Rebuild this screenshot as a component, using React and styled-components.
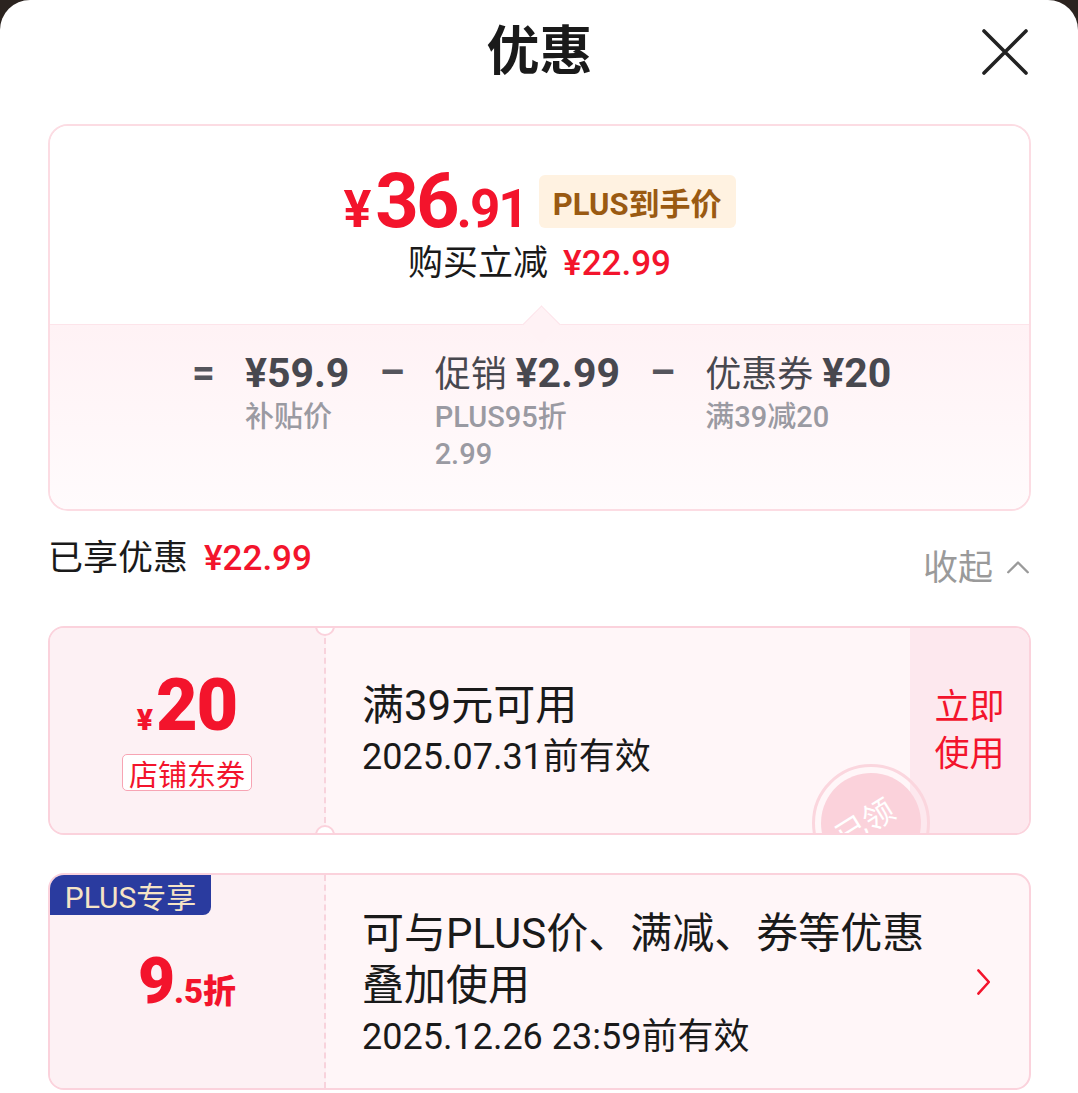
import React from 'react';
import styled, { createGlobalStyle } from 'styled-components';

const GlobalStyle = createGlobalStyle`
  html, body {
    margin: 0;
    padding: 0;
    background: #2b231f;
  }
  body {
    font-family: Roboto, "Noto Sans CJK SC", sans-serif;
    color: #1a1a1a;
  }
  * {
    box-sizing: border-box;
  }
`;

const RED = '#f3142c';

const Sheet = styled.div`
  width: 1078px;
  min-height: 1093px;
  background: #fff;
  border-radius: 30px 30px 0 0;
  padding: 0 47px 0 48px;
  overflow: hidden;
`;

const Header = styled.div`
  height: 104px;
  display: grid;
  grid-template-columns: 1fr auto 1fr;
  align-items: center;
`;

const Title = styled.h1`
  grid-column: 2;
  margin: 0;
  font-size: 53px;
  font-weight: 700;
  line-height: 1;
  color: #1a1a1a;
`;

const CloseButton = styled.button`
  justify-self: end;
  margin-right: 2px;
  width: 48px;
  height: 48px;
  padding: 0;
  border: none;
  background: none;
  display: flex;
  align-items: center;
  justify-content: center;
`;

const PriceCard = styled.div`
  margin-top: 20px;
  border: 2px solid #fcdce3;
  border-radius: 20px;
  overflow: hidden;
`;

const PriceTop = styled.div`
  height: 198px;
  padding-top: 40px;
  display: flex;
  flex-direction: column;
  align-items: center;
  background: #fff;
`;

const PriceRow = styled.div`
  display: flex;
  align-items: center;
  height: 70px;
  color: ${RED};
  font-weight: 700;
`;

const Yen = styled.span`
  font-size: ${p => p.$size}px;
  font-weight: 700;
  margin-right: ${p => p.$gap || 0}px;
`;

const PriceNum = styled.span`
  display: flex;
  align-items: baseline;
  line-height: 1;
`;

const BigDigits = styled.span`
  font-size: 76px;
  letter-spacing: -3px;
`;

const SmallDigits = styled.span`
  font-size: 53px;
  letter-spacing: -2px;
`;

const PlusTag = styled.span`
  margin-left: 12px;
  height: 53px;
  padding: 0 14px;
  display: flex;
  align-items: center;
  background: #fff2e1;
  border-radius: 6px;
  color: #9a5a12;
  font-size: 31px;
  font-weight: 700;
`;

const SaveRow = styled.div`
  margin-top: 6px;
  display: flex;
  align-items: center;
  gap: 15px;
  font-size: 35px;
  line-height: 44px;
  color: #1a1a1a;
`;

const RedAmount = styled.span`
  color: ${RED};
  font-weight: 500;
  font-size: ${p => p.$size || 35}px;
`;

const PriceBottom = styled.div`
  position: relative;
  height: 185px;
  border-top: 1px solid #fde4ea;
  background: linear-gradient(#fff2f5, #fffbfc);
  padding: 24px 0 0 142px;
  display: flex;
  align-items: flex-start;
  gap: 30px;

  &::before {
    content: '';
    position: absolute;
    left: 478px;
    top: -14px;
    width: 26px;
    height: 26px;
    background: #fff2f5;
    border-left: 1px solid #fde4ea;
    border-top: 1px solid #fde4ea;
    transform: rotate(45deg);
  }
`;

const Operator = styled.span`
  font-size: 40px;
  font-weight: 700;
  line-height: 48px;
  color: #55555c;
`;

const Term = styled.div`
  display: flex;
  flex-direction: column;
`;

const TermTitle = styled.div`
  font-size: 36px;
  line-height: 48px;
  color: #48484f;
  white-space: nowrap;

  b {
    font-weight: 700;
    font-size: 41px;
  }
`;

const TermSub = styled.div`
  font-size: 29px;
  line-height: 37px;
  color: #9a9aa2;
  font-weight: 500;
`;

const EnjoyRow = styled.div`
  height: 115px;
  display: flex;
  justify-content: space-between;
  align-items: flex-start;
  padding-top: 25px;
`;

const EnjoyLabel = styled.div`
  display: flex;
  align-items: center;
  gap: 16px;
  font-size: 35px;
  line-height: 46px;
`;

const Collapse = styled.button`
  margin-top: 11px;
  border: none;
  background: none;
  padding: 0;
  display: flex;
  align-items: center;
  gap: 12px;
  font-family: inherit;
  font-size: 35px;
  line-height: 44px;
  color: #9a9a9a;
`;

const Coupon = styled.div`
  position: relative;
  height: ${p => p.$height}px;
  margin-bottom: 38px;
  display: grid;
  grid-template-columns: 276px 1fr ${p => (p.$action ? '119px' : '70px')};
  border: 2px solid #fbd2dc;
  border-radius: 16px;
  overflow: hidden;
  background: #fff6f8;
`;

const CouponLeft = styled.div`
  position: relative;
  display: flex;
  flex-direction: column;
  align-items: center;
  justify-content: center;
  background: #fdf1f4;
  border-right: 2px dashed #f8d3dc;
`;

const Notch = styled.span`
  position: absolute;
  right: -11px;
  ${p => (p.$bottom ? 'bottom: -12px;' : 'top: -12px;')}
  width: 20px;
  height: 20px;
  border-radius: 50%;
  background: #fff;
  border: 2px solid #fbd2dc;
  z-index: 2;
`;

const Amount = styled.div`
  display: flex;
  align-items: baseline;
  color: ${RED};
  font-weight: 900;
  line-height: 1;
`;

const AmountBig = styled.span`
  font-size: ${p => p.$size}px;
  letter-spacing: -1px;
`;

const AmountSmall = styled.span`
  font-size: ${p => p.$size}px;
  margin-right: ${p => p.$gap || 0}px;
`;

const StoreTag = styled.span`
  margin-top: 12px;
  padding: 0 6px;
  height: 37px;
  display: flex;
  align-items: center;
  border: 1px solid #f7a4b3;
  border-radius: 5px;
  background: #fff;
  color: ${RED};
  font-size: 29px;
`;

const PlusBadge = styled.span`
  position: absolute;
  left: 0;
  top: 0;
  width: 161px;
  height: 40px;
  display: flex;
  align-items: center;
  justify-content: center;
  background: #2a3b9f;
  border-radius: 0 0 8px 0;
  color: #f5e4c6;
  font-size: 30px;
`;

const CouponBody = styled.div`
  display: flex;
  flex-direction: column;
  justify-content: center;
  padding: ${p => p.$offset || 0}px 0 0 36px;
  color: #1a1a1a;
`;

const BodyTitle = styled.div`
  font-size: 42px;
  line-height: 52px;
  white-space: nowrap;
`;

const BodyDate = styled.div`
  font-size: 36px;
  line-height: 50px;
  white-space: nowrap;
`;

const UseNow = styled.div`
  display: flex;
  align-items: center;
  justify-content: center;
  background: #fde8ee;
  color: ${RED};
  font-size: 35px;
  line-height: 47px;
  text-align: center;
`;

const ArrowCell = styled.div`
  display: flex;
  align-items: center;
  justify-content: flex-start;
  padding-left: 10px;
`;

const Stamp = styled.div`
  position: absolute;
  left: 762px;
  top: 136px;
  width: 118px;
  height: 118px;
  border-radius: 50%;
  border: 3px solid #fbd6de;
  display: flex;
  align-items: center;
  justify-content: center;
`;

const StampInner = styled.div`
  width: 100px;
  height: 100px;
  border-radius: 50%;
  background: #fbd2db;
  display: flex;
  align-items: center;
  justify-content: center;
  color: #fff;
  font-size: 31px;
  transform: rotate(-32deg);
  padding: 0 10px 12px 0;
`;

const terms = [
  { title: '¥59.9', sub: ['补贴价'] },
  { title: '促销', amount: '¥2.99', sub: ['PLUS95折', '2.99'] },
  { title: '优惠券', amount: '¥20', sub: ['满39减20'] },
];

function CloseIcon() {
  return (
    <svg width="48" height="48" viewBox="0 0 48 48">
      <path d="M3 3 L45 45 M45 3 L3 45" stroke="#222" strokeWidth="3.6" strokeLinecap="round" />
    </svg>
  );
}

function Chevron({ dir, color, size }) {
  const d = dir === 'up' ? 'M3 15 L12 6 L21 15' : 'M8 2 L17 12 L8 22';
  return (
    <svg width={size} height={size} viewBox="0 0 24 24">
      <path d={d} fill="none" stroke={color} strokeWidth="2.2" strokeLinecap="round" strokeLinejoin="round" />
    </svg>
  );
}

export default function App() {
  return (
    <>
      <GlobalStyle />
      <Sheet>
        <Header>
          <Title>优惠</Title>
          <CloseButton aria-label="关闭">
            <CloseIcon />
          </CloseButton>
        </Header>

        <PriceCard>
          <PriceTop>
            <PriceRow>
              <PriceNum>
                <Yen $size={52} $gap={4}>¥</Yen>
                <BigDigits>36</BigDigits>
                <SmallDigits>.91</SmallDigits>
              </PriceNum>
              <PlusTag>PLUS到手价</PlusTag>
            </PriceRow>
            <SaveRow>
              购买立减
              <RedAmount>¥22.99</RedAmount>
            </SaveRow>
          </PriceTop>
          <PriceBottom>
            {terms.map((t, i) => (
              <React.Fragment key={t.title}>
                <Operator>{i === 0 ? '=' : '–'}</Operator>
                <Term>
                  <TermTitle>
                    {t.amount ? (
                      <>
                        {t.title} <b>{t.amount}</b>
                      </>
                    ) : (
                      <b>{t.title}</b>
                    )}
                  </TermTitle>
                  {t.sub.map(s => (
                    <TermSub key={s}>{s}</TermSub>
                  ))}
                </Term>
              </React.Fragment>
            ))}
          </PriceBottom>
        </PriceCard>

        <EnjoyRow>
          <EnjoyLabel>
            已享优惠
            <RedAmount>¥22.99</RedAmount>
          </EnjoyLabel>
          <Collapse>
            收起
            <Chevron dir="up" color="#9a9a9a" size={26} />
          </Collapse>
        </EnjoyRow>

        <Coupon $height={209} $action>
          <CouponLeft>
            <Notch />
            <Notch $bottom />
            <Amount>
              <AmountSmall $size={30} $gap={3}>¥</AmountSmall>
              <AmountBig $size={72}>20</AmountBig>
            </Amount>
            <StoreTag>店铺东券</StoreTag>
          </CouponLeft>
          <CouponBody>
            <BodyTitle>满39元可用</BodyTitle>
            <BodyDate>2025.07.31前有效</BodyDate>
          </CouponBody>
          <UseNow>
            立即
            <br />
            使用
          </UseNow>
          <Stamp>
            <StampInner>已领</StampInner>
          </Stamp>
        </Coupon>

        <Coupon $height={217}>
          <CouponLeft>
            <PlusBadge>PLUS专享</PlusBadge>
            <Amount>
              <AmountBig $size={64}>9</AmountBig>
              <AmountSmall $size={33}>.5折</AmountSmall>
            </Amount>
          </CouponLeft>
          <CouponBody $offset={6}>
            <BodyTitle>可与PLUS价、满减、券等优惠</BodyTitle>
            <BodyTitle>叠加使用</BodyTitle>
            <BodyDate>2025.12.26 23:59前有效</BodyDate>
          </CouponBody>
          <ArrowCell>
            <Chevron dir="right" color={RED} size={28} />
          </ArrowCell>
        </Coupon>
      </Sheet>
    </>
  );
}
